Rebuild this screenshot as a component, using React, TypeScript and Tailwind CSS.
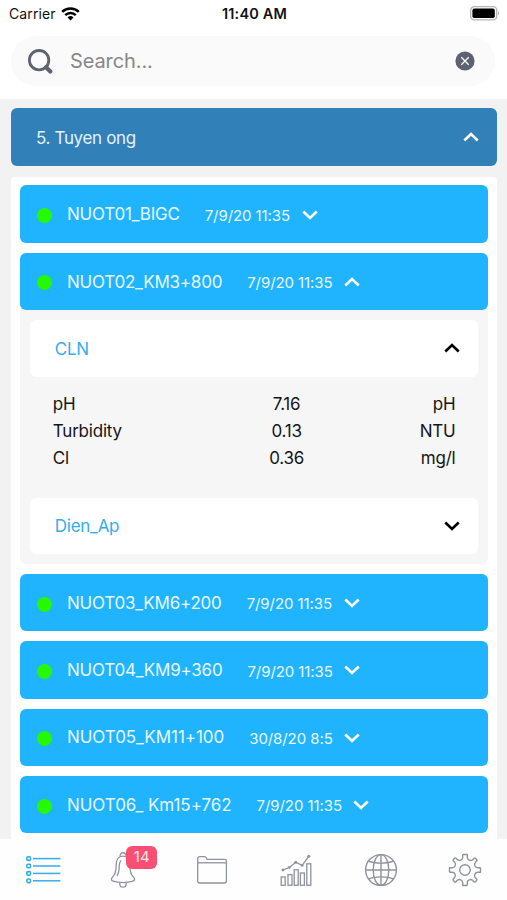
type Station = {
  name: string;
  time: string;
  open?: boolean;
  wide?: boolean;
};

const stationsTop: Station[] = [
  { name: "NUOT01_BIGC", time: "7/9/20 11:35" },
  { name: "NUOT02_KM3+800", time: "7/9/20 11:35", open: true },
];

const stationsBottom: Station[] = [
  { name: "NUOT03_KM6+200", time: "7/9/20 11:35" },
  { name: "NUOT04_KM9+360", time: "7/9/20 11:35" },
  { name: "NUOT05_KM11+100", time: "30/8/20 8:5", wide: true },
  { name: "NUOT06_ Km15+762", time: "7/9/20 11:35", wide: true },
];

const readings = [
  { label: "pH", value: "7.16", unit: "pH" },
  { label: "Turbidity", value: "0.13", unit: "NTU" },
  { label: "Cl", value: "0.36", unit: "mg/l" },
];

const Chevron = ({ up = false, className = "" }: { up?: boolean; className?: string }) => (
  <svg
    width="16"
    height="10"
    viewBox="0 0 16 10"
    fill="none"
    stroke="currentColor"
    strokeWidth="2.7"
    className={`shrink-0 ${className}`}
  >
    <path d={up ? "M1.3 8.4 L8 2.1 L14.7 8.4" : "M1.3 1.6 L8 7.9 L14.7 1.6"} />
  </svg>
);

const StatusBar = () => (
  <div className="grid h-[27px] grid-cols-3 items-center pl-[9px] pr-[7px] text-[14px] text-[#111]">
    <div className="flex items-center gap-[5px]">
      <span className="tracking-[0.1px]">Carrier</span>
      <svg width="19" height="14" viewBox="0 0 19 14" fill="none" stroke="#000" strokeWidth="2.5">
        <path d="M1.2 4.9 A12 12 0 0 1 17.8 4.9" />
        <path d="M4.2 8.1 A7.6 7.6 0 0 1 14.8 8.1" />
        <path d="M9.5 13.4 L6.5 10.4 A4.3 4.3 0 0 1 12.5 10.4 Z" fill="#000" stroke="none" />
      </svg>
    </div>
    <span className="text-center text-[14.5px] font-semibold tracking-[0.15px]">11:40 AM</span>
    <div className="flex justify-end">
      <svg width="30" height="15" viewBox="0 0 30 15">
        <rect x="0.7" y="0.7" width="26" height="13.2" rx="3.6" fill="#fff" stroke="#b5b5b5" strokeWidth="1.3" />
        <rect x="2.4" y="2.6" width="22.4" height="9.4" rx="1.8" fill="#000" />
        <path d="M28 5 Q30 7.2 28 9.6 Z" fill="#b5b5b5" />
      </svg>
    </div>
  </div>
);

const SearchBar = () => (
  <div className="mt-[9px] ml-[11px] mr-[12px] flex h-[50px] items-center rounded-full bg-[#fafafb] pl-[16px] pr-[20px]">
    <svg width="27" height="27" viewBox="0 0 27 27" fill="none" stroke="#5d6370">
      <circle cx="12.1" cy="12.2" r="9.7" strokeWidth="2.8" />
      <path d="M19 19.2 L23.4 23.6" strokeWidth="4.2" strokeLinecap="round" />
    </svg>
    <span className="ml-[16px] text-[20px] tracking-[-0.1px] text-[#878787]">Search...</span>
    <svg width="20" height="20" viewBox="0 0 20 20" className="ml-auto">
      <circle cx="10" cy="10" r="9.6" fill="#5d6270" />
      <path d="M6.3 6.3 L13.7 13.7 M13.7 6.3 L6.3 13.7" stroke="#fff" strokeWidth="1.3" />
    </svg>
  </div>
);

const StationRow = ({ name, time, open, wide }: Station) => (
  <div className="flex h-[57.3px] shrink-0 items-center rounded-[6px] bg-[#20b4ff] pl-[17px] text-[#e9f8ff]">
    <span className="mt-[3px] h-[15px] w-[15px] shrink-0 rounded-full bg-[#25f800]" />
    <span
      className={`ml-[14.6px] mt-[2px] whitespace-nowrap text-[17px] ${wide ? "tracking-[-0.05px]" : "tracking-[-0.22px]"}`}
    >
      {name}
    </span>
    <span className="ml-[25px] mt-[4px] whitespace-nowrap text-[15px] tracking-[-0.08px]">{time}</span>
    <Chevron up={open} className="ml-[11.5px] mt-[1px] text-white" />
  </div>
);

const GroupHeader = ({ title, open }: { title: string; open?: boolean }) => (
  <div className="flex h-[56.8px] items-center justify-between rounded-[6px] bg-white pl-[24.4px] pr-[18px]">
    <span className="mt-[2.4px] text-[17px] tracking-[-0.25px] text-[#36adeb]">{title}</span>
    <Chevron up={open} className="text-black" />
  </div>
);

const StationDetails = () => (
  <div className="mt-[-10px] rounded-b-[6px] bg-[#f6f6f6] pl-[10px] pr-[9.5px] pt-[10px] pb-[9.6px]">
    <GroupHeader title="CLN" open />
    <div className="h-[120.8px] pt-[14.3px] pl-[22.4px] pr-[22.5px]">
      {readings.map((r) => (
        <div
          key={r.label}
          className="grid h-[27px] grid-cols-[1fr_100px_1fr] items-center text-[17px] tracking-[-0.2px] text-[#151515]"
        >
          <span>{r.label}</span>
          <span className="pl-[65px] text-center whitespace-nowrap">{r.value}</span>
          <span className="text-right">{r.unit}</span>
        </div>
      ))}
    </div>
    <GroupHeader title="Dien_Ap" />
  </div>
);

const TabBar = () => (
  <nav className="flex h-[61px] shrink-0 items-center bg-[#fefefe] text-[#8f939b]">
    <div className="flex w-[84.5px] justify-center pl-[1px]">
      <svg width="36" height="30" viewBox="0 0 36 30" fill="none" stroke="#35aceb">
        {[3.6, 11, 18.4, 25.8].map((y) => (
          <g key={y}>
            <rect x="1.9" y={y - 1.8} width="3.6" height="3.6" rx="1" strokeWidth="1.6" />
            <path d={`M8 ${y} H35.4`} strokeWidth="1.5" />
          </g>
        ))}
      </svg>
    </div>
    <div className="flex w-[84.5px] justify-center">
      <div className="relative mr-[7px]">
        <svg width="28" height="36" viewBox="0 0 28 36" fill="none" stroke="currentColor" strokeWidth="1.3">
          <path d="M11.2 4.4 A2.9 2.9 0 1 1 16.8 4.4" />
          <path d="M14 4.2 C9.5 4.2 7.2 8 7.2 12.5 C7.2 19 6.5 22.5 3.6 25 C2 26.5 2 28.5 4 29.1 C9.5 31 18.5 31 24 29.1 C26 28.5 26 26.5 24.4 25 C21.5 22.5 20.8 19 20.8 12.5 C20.8 8 18.5 4.2 14 4.2 Z" />
          <path d="M12.3 8.5 C10 10 10.3 13 10.2 16 C10 20 9.2 22 8 24" />
          <path d="M10.8 30.4 V32 A3.2 3.2 0 0 0 17.2 32 V30.4" />
        </svg>
        <span className="absolute left-[17px] top-[-6px] flex h-[23px] w-[31px] items-center justify-center rounded-[6px] bg-[#fa4f74] text-[15px] text-[#ffe4ea]">
          14
        </span>
      </div>
    </div>
    <div className="flex w-[84.5px] justify-center pl-[1px]">
      <svg width="32" height="30" viewBox="0 0 32 30" fill="none" stroke="currentColor" strokeWidth="1.3">
        <path d="M1.7 26 V3.7 Q1.7 1.7 3.7 1.7 H8.5 Q9.7 1.7 10.4 3 L11.1 4.3 H28.6 Q30.4 4.3 30.4 6 V26 Q30.4 28 28.4 28 H3.7 Q1.7 28 1.7 26 Z" />
        <path d="M1.7 7.8 H30.4" />
      </svg>
    </div>
    <div className="flex w-[84.5px] justify-center pl-[1px]">
      <svg width="34" height="34" viewBox="0 0 34 34" fill="none" stroke="currentColor" strokeWidth="1.3">
        <rect x="2.2" y="24" width="4" height="8.3" />
        <rect x="9" y="21.6" width="4" height="10.7" />
        <rect x="15.2" y="16.8" width="4" height="15.5" />
        <rect x="21.4" y="20" width="4" height="12.3" />
        <rect x="27.8" y="10.8" width="4" height="21.5" />
        <path d="M4 17 L10.4 14.4 L16.8 9.2 L23.2 12.4 L29.8 3.2" />
        <g fill="currentColor" stroke="none">
          <circle cx="4" cy="17" r="1.4" />
          <circle cx="10.4" cy="14.4" r="1.3" />
          <circle cx="16.8" cy="9.2" r="1.5" />
          <circle cx="23.2" cy="12.4" r="1.3" />
          <circle cx="29.8" cy="3.2" r="1.5" />
        </g>
      </svg>
    </div>
    <div className="flex w-[84.5px] justify-center pl-[1px]">
      <svg width="34" height="34" viewBox="0 0 34 34" fill="none" stroke="currentColor" strokeWidth="1.4">
        <circle cx="17" cy="17" r="15.4" />
        <ellipse cx="17" cy="17" rx="7.8" ry="15.4" />
        <path d="M17 1.6 V32.4 M1.6 17 H32.4" />
        <path d="M4.6 8 C11 10.8 23 10.8 29.4 8 M4.6 26 C11 23.2 23 23.2 29.4 26" />
      </svg>
    </div>
    <div className="flex w-[84.5px] justify-center">
      <svg width="34" height="34" viewBox="0 0 34 34" fill="none" stroke="currentColor" strokeWidth="1.4" strokeLinejoin="round">
        <circle cx="17" cy="17" r="5.3" />
        {/* a quarter of the rim, turned four times */}
        {[0, 90, 180, 270].map((angle) => (
          <path
            key={angle}
            transform={`rotate(${angle} 17 17)`}
            d="M14.7 1.5 H19.3 V4.4 C19.3 6.8 22.8 8.6 24.7 6.7 L26 5.4 Q26.8 4.7 27.6 5.4 L28.8 6.6 Q29.4 7.3 28.7 8.1 L27.4 9.4 C25.5 11.2 27.2 14.7 29.6 14.7 H32.5"
          />
        ))}
      </svg>
    </div>
  </nav>
);

export default function App() {
  return (
    <div className="flex h-[900px] w-[507px] flex-col overflow-hidden bg-white font-['Inter',sans-serif]">
      <header className="h-[98.5px] shrink-0 bg-white">
        <StatusBar />
        <SearchBar />
      </header>
      <main className="flex min-h-0 flex-1 flex-col overflow-hidden bg-[#f2f2f2] pt-[9.8px] pl-[11px] pr-[10px]">
        <div className="flex h-[57.3px] shrink-0 items-center justify-between rounded-[6px] bg-[#3180b7] pl-[25px] pr-[18px] text-[17px] tracking-[-0.35px] text-[#e4f1fa]">
          <span className="mt-[3px]">5. Tuyen ong</span>
          <Chevron up className="text-white" />
        </div>
        <div className="mt-[11px] flex flex-1 flex-col gap-[10px] rounded-t-[4px] bg-white pl-[9.4px] pr-[9.5px] pt-[8.8px]">
          {stationsTop.map((s) => (
            <StationRow key={s.name} {...s} />
          ))}
          <StationDetails />
          {stationsBottom.map((s) => (
            <StationRow key={s.name} {...s} />
          ))}
        </div>
      </main>
      <TabBar />
    </div>
  );
}
